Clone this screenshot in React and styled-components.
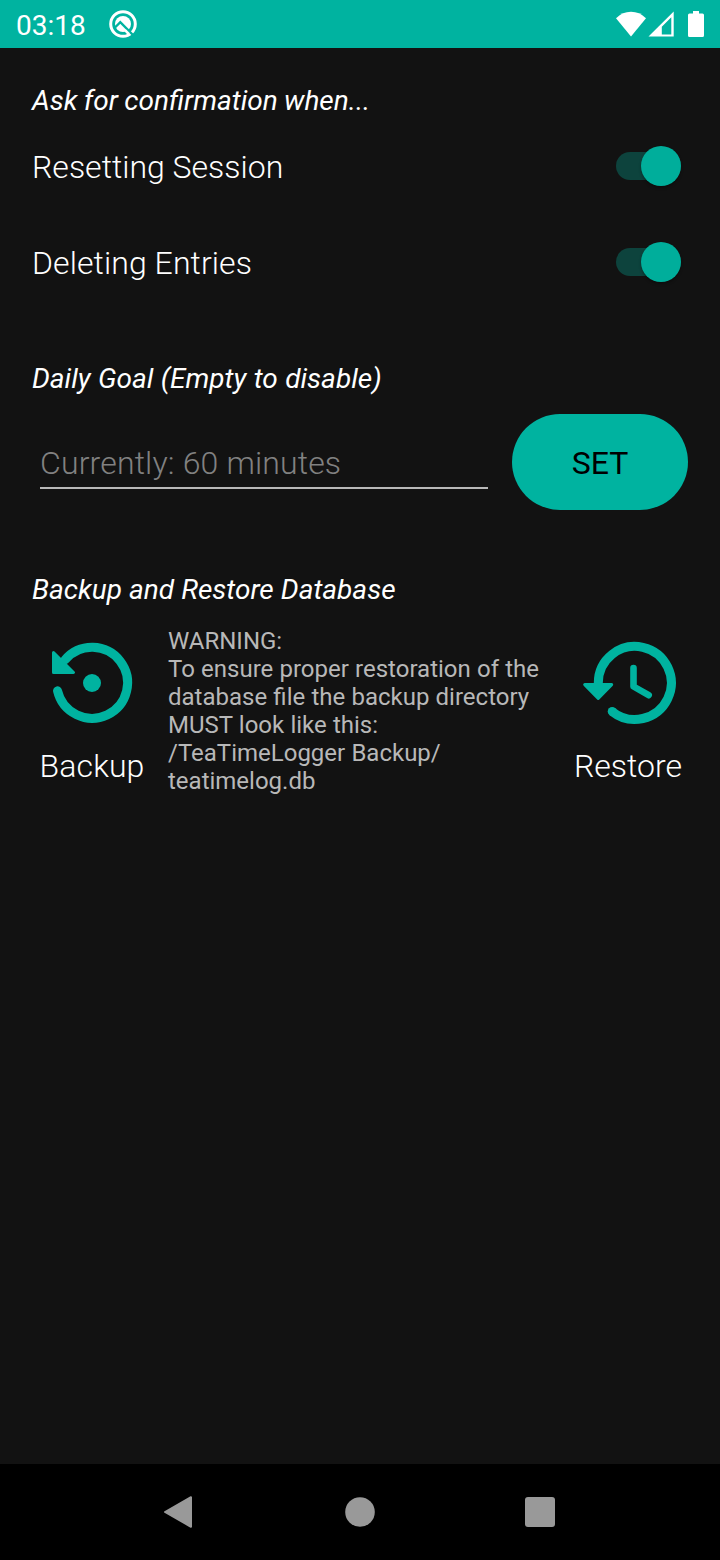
import React from "react";
import styled, { createGlobalStyle } from "styled-components";

const TEAL = "#00b3a0";
const BG = "#121212";

const GlobalStyle = createGlobalStyle`
  *, *::before, *::after { box-sizing: border-box; }
  body { margin: 0; background: ${BG}; font-family: Roboto, sans-serif; color: #fff; }
  svg { display: block; overflow: visible; flex: none; }
`;

const Screen = styled.div`
  display: flex;
  flex-direction: column;
  width: 720px;
  height: 1560px;
  background: ${BG};
`;

const StatusBar = styled.header`
  display: flex;
  align-items: center;
  height: 48px;
  padding: 0 16px;
  background: ${TEAL};
`;

const Clock = styled.time`
  margin-right: 22px;
  width: 71px;
  font-size: 28px;
  line-height: 34px;
  padding-top: 3px;
  white-space: nowrap;
`;

const StatusIcons = styled.div`
  display: flex;
  align-items: center;
  margin-left: auto;
`;

const BatterySlot = styled.span`
  margin-left: 14px;
`;

const Content = styled.main`
  flex: 1;
  display: flex;
  flex-direction: column;
  padding: 33px 32px 0;
`;

const Heading = styled.h2`
  margin: 0;
  padding-top: ${(p) => p.$top || 0}px;
  font-size: 28px;
  font-weight: 400;
  font-style: italic;
  line-height: 40px;
  word-spacing: ${(p) => p.$words || 0}px;
  white-space: nowrap;
`;

const SettingRow = styled.label`
  display: flex;
  align-items: center;
  justify-content: space-between;
  height: 96px;
  padding-right: 7px;
`;

const SettingList = styled.div`
  margin-top: -3px;
`;

const Label = styled.span`
  font-size: 32px;
  font-weight: 300;
  line-height: 38px;
  padding-top: 2px;
  letter-spacing: ${(p) => p.$tracking || 0}px;
  white-space: nowrap;
`;

const Track = styled.span`
  display: flex;
  align-items: center;
  justify-content: flex-end;
  width: 65px;
  height: 28px;
  border-radius: 14px;
  background: #0d433d;
`;

const Thumb = styled.span`
  flex: none;
  width: 40px;
  height: 40px;
  border-radius: 50%;
  background: #00ae9b;
  box-shadow: 0 2px 3px rgba(0, 0, 0, 0.3);
`;

const GoalRow = styled.div`
  display: flex;
  align-items: center;
  justify-content: space-between;
  height: 96px;
  margin-top: 15px;
  padding-left: 8px;
`;

const GoalInput = styled.input`
  width: 448px;
  height: 53px;
  padding: 4px 0 0;
  border: 0;
  border-bottom: 2px solid #b8b8b8;
  background: transparent;
  color: #fff;
  font: 300 32px/38px Roboto, sans-serif;
  letter-spacing: 0.15px;
  outline: none;
  &::placeholder { color: #818181; opacity: 1; }
`;

const SetButton = styled.button`
  width: 176px;
  height: 96px;
  padding: 1px 0 0;
  border: 0;
  border-radius: 48px;
  background: ${TEAL};
  color: #000;
  font: 400 32px/38px Roboto, sans-serif;
`;

const BackupRow = styled.div`
  display: flex;
  align-items: flex-start;
  margin-top: 17px;
`;

const Action = styled.div`
  display: flex;
  flex-direction: column;
  align-items: center;
  width: 120px;
  padding-top: 8px;
  gap: 14px;
`;

const Warning = styled.p`
  width: 400px;
  margin: 0 0 0 16px;
  color: #b8b8b8;
  font-size: 24px;
  line-height: 28px;
  word-spacing: 0.25px;
  white-space: pre-line;
`;

const NavBar = styled.nav`
  display: flex;
  align-items: center;
  justify-content: center;
  gap: 148px;
  height: 96px;
  background: #000;
`;

const QIcon = () => (
  <svg width="28" height="28" viewBox="0 0 28 28">
    <circle cx="14" cy="14" r="12.3" fill="none" stroke="#fff" strokeWidth="3" />
    <circle cx="14" cy="14" r="8" fill="#fff" />
    <path d="M6 17.5 L11.3 12.2 L25 26" fill="none" stroke={TEAL} strokeWidth="2.4" />
    <path d="M16 20.2 L19.8 24" fill="none" stroke="#fff" strokeWidth="2.5" />
  </svg>
);

const WifiIcon = () => (
  <svg width="32" height="26" viewBox="0 0 32 26">
    <path d="M15 25.5 L0 7.2 Q6.5 .8 15 .8 Q23.500 .8 30 7.200 Z" fill="#fff" />
  </svg>
);

const SignalIcon = () => (
  <svg width="26" height="26" viewBox="0 0 26 26">
    <path d="M.5 25.500 L25.700 .5 V25.500 Z M13.800 15.700 V23.500 H23.300 V6.200 Z" fill="#fff" fillRule="evenodd" />
  </svg>
);

const BatteryIcon = () => (
  <svg width="16" height="26" viewBox="0 0 16 26">
    <path d="M5 0 H11 V2.500 H14.500 Q16 2.500 16 4 V24.500 Q16 26 14.500 26 H1.500 Q0 26 0 24.500 V4 Q0 2.500 1.500 2.500 H5 Z" fill="#fff" />
  </svg>
);

const BackupIcon = () => (
  <svg width="96" height="96" viewBox="0 0 96 96">
    <path d="M13.500 55.800 A35.500 35.500 0 1 0 21 24.800" fill="none" stroke={TEAL} strokeWidth="9" strokeLinecap="round" />
    <path d="M9.500 17.500 L29.500 37.500 H9.500 Z" fill={TEAL} stroke={TEAL} strokeWidth="3" strokeLinejoin="round" />
    <circle cx="48" cy="48" r="9" fill={TEAL} />
  </svg>
);

const RestoreIcon = () => (
  <svg width="96" height="96" viewBox="0 0 96 96">
    <path d="M18.300 50 V48 A36.500 36.500 0 1 1 32 76.400" fill="none" stroke={TEAL} strokeWidth="9" />
    <circle cx="32.200" cy="76.400" r="4.500" fill={TEAL} />
    <path d="M4.700 49.600 H31.700 L18.200 63.500 Z" fill={TEAL} stroke={TEAL} strokeWidth="3" strokeLinejoin="round" />
    <path d="M53.500 33 V51.500 L68.700 60.200" fill="none" stroke={TEAL} strokeWidth="6.600" strokeLinecap="round" strokeLinejoin="round" />
  </svg>
);

const Toggle = () => (
  <Track role="switch" aria-checked="true">
    <Thumb />
  </Track>
);

export default function App() {
  return (
    <Screen>
      <GlobalStyle />
      <StatusBar>
        <Clock>03:18</Clock>
        <QIcon />
        <StatusIcons>
          <WifiIcon />
          <SignalIcon />
          <BatterySlot>
            <BatteryIcon />
          </BatterySlot>
        </StatusIcons>
      </StatusBar>
      <Content>
        <Heading $words={-0.6}>Ask for confirmation when...</Heading>
        <SettingList>
          <SettingRow>
            <Label>Resetting Session</Label>
            <Toggle />
          </SettingRow>
          <SettingRow>
            <Label $tracking={0.08}>Deleting Entries</Label>
            <Toggle />
          </SettingRow>
        </SettingList>
        <Heading $top={49} $words={0.5}>Daily Goal (Empty to disable)</Heading>
        <GoalRow>
          <GoalInput placeholder="Currently: 60 minutes" />
          <SetButton>SET</SetButton>
        </GoalRow>
        <Heading $top={60} $words={0.2}>Backup and Restore Database</Heading>
        <BackupRow>
          <Action>
            <BackupIcon />
            <Label $tracking={0.1}>Backup</Label>
          </Action>
          <Warning>
            {"WARNING:\nTo ensure proper restoration of the\ndatabase file the backup directory\nMUST look like this:\n/TeaTimeLogger Backup/\nteatimelog.db"}
          </Warning>
          <Action>
            <RestoreIcon />
            <Label>Restore</Label>
          </Action>
        </BackupRow>
      </Content>
      <NavBar>
        <svg width="32" height="32" viewBox="0 0 32 32">
          <path d="M1 16 L27 1.200 V30.800 Z" fill="#999" stroke="#999" strokeWidth="2" strokeLinejoin="round" />
        </svg>
        <svg width="32" height="32" viewBox="0 0 32 32">
          <circle cx="16" cy="16" r="14.800" fill="#999" />
        </svg>
        <svg width="32" height="32" viewBox="0 0 32 32">
          <rect x="1" y="1" width="30" height="30" rx="3" fill="#999" />
        </svg>
      </NavBar>
    </Screen>
  );
}
